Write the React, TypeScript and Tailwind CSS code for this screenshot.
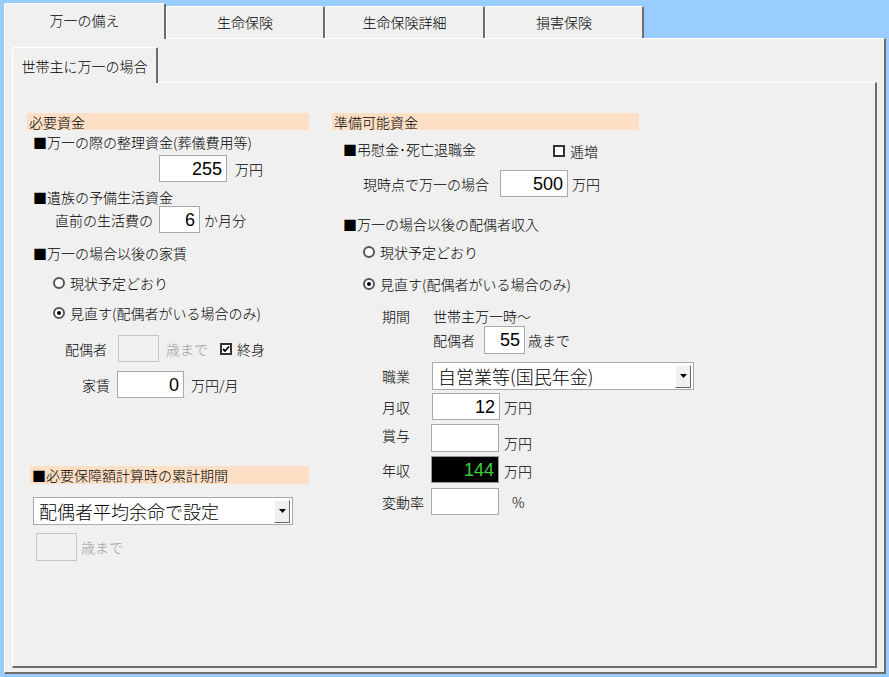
import React from "react";

type BoxProps = {
  value?: string;
  className: string;
  dark?: boolean;
  disabled?: boolean;
};

function Box({ value = "", className, dark, disabled }: BoxProps) {
  const tone = dark
    ? "bg-black text-[#3ccf3c] border-[#9a9a9a]"
    : disabled
    ? "bg-[#f0f0f0] border-[#c4c4c4]"
    : "bg-white text-black border-[#a9a9a9]";
  return (
    <div
      className={`flex shrink-0 items-center justify-end border pr-[4px] font-['Liberation_Sans',sans-serif] text-[18px] leading-none ${tone} ${className}`}
    >
      {value}
    </div>
  );
}

function Radio({ checked }: { checked?: boolean }) {
  return (
    <span className="flex h-[12px] w-[12px] shrink-0 items-center justify-center rounded-full border-2 border-[#555] bg-white">
      {checked && <span className="h-[4px] w-[4px] rounded-full bg-black" />}
    </span>
  );
}

function Check({ checked }: { checked?: boolean }) {
  return (
    <span className="flex h-[12px] w-[12px] shrink-0 items-center justify-center border-2 border-[#333] bg-white">
      {checked && (
        <svg width="8" height="8" viewBox="0 0 8 8">
          <path d="M1 4 L3 6 L7 1.5" stroke="#000" strokeWidth="1.8" fill="none" />
        </svg>
      )}
    </span>
  );
}

function Select({ value, className }: { value: string; className: string }) {
  return (
    <div
      className={`flex shrink-0 items-center border border-[#a9a9a9] bg-white pl-[5px] pr-[2px] text-[18px] leading-none ${className}`}
    >
      <span className="flex-1 whitespace-nowrap">{value}</span>
      <span className="flex h-[23px] w-[16px] shrink-0 items-center justify-center border border-t-white border-l-white border-r-[#696969] border-b-[#696969] bg-[#f0f0f0]">
        <svg width="7" height="4" viewBox="0 0 7 4">
          <path d="M0 0 H7 L3.5 4 Z" fill="#000" />
        </svg>
      </span>
    </div>
  );
}

function Tab({ label, active, className }: { label: string; active?: boolean; className: string }) {
  return (
    <div
      className={`flex items-center justify-center rounded-t-[2px] border-t border-l border-r-2 border-t-white border-l-white border-r-[#6d6d6d] bg-[#f0f0f0] text-[14px] ${
        active ? "z-10 -mb-px h-[36px]" : "h-[32px]"
      } ${className}`}
    >
      {label}
    </div>
  );
}

export default function App() {
  return (
    <div className="flex h-[677px] w-[889px] flex-col bg-[#99ccff] pl-[4px] pt-[3px] font-['Noto_Sans_CJK_JP',sans-serif] font-light text-black">
      {/* top tabs */}
      <div className="flex h-[35px] items-end">
        <Tab label="万一の備え" active className="w-[162px] pb-[2px]" />
        <Tab label="生命保険" className="w-[159px]" />
        <Tab label="生命保険詳細" className="w-[160px]" />
        <Tab label="損害保険" className="w-[159px]" />
      </div>

      <div className="flex h-[636px] w-[882px] flex-col border-t border-l border-r-2 border-b-2 border-t-white border-l-white border-r-[#6d6d6d] border-b-[#6d6d6d] bg-[#f0f0f0] pl-[7px] pt-[6px]">
        {/* inner tab */}
        <div className="flex h-[37px] items-end">
          <Tab label="世帯主に万一の場合" active className="w-[146px] pt-[2px]" />
        </div>

        <div className="flex h-[586px] w-[865px] border-t border-l border-r-2 border-b-2 border-t-white border-l-white border-r-[#6d6d6d] border-b-[#6d6d6d] pl-[14px] pt-[30px] text-[14px] leading-none">
          {/* left column */}
          <div className="flex w-[282px] shrink-0 flex-col">
            <div className="flex h-[17px] items-center bg-[#fddfc5] pl-[2px]">必要資金</div>
            <div className="ml-[6px] mt-[3px] flex h-[18px] items-center">■万一の際の整理資金(葬儀費用等)</div>
            <div className="ml-[132px] mt-[4px] flex items-center">
              <Box className="h-[27px] w-[68px]" value="255" />
              <span className="ml-[8px]">万円</span>
            </div>
            <div className="ml-[6px] mt-[7px] flex h-[16px] items-center">■遺族の予備生活資金</div>
            <div className="ml-[28px] mt-[1px] flex items-center">
              <span className="w-[104px] shrink-0">直前の生活費の</span>
              <Box className="h-[27px] w-[41px]" value="6" />
              <span className="ml-[4px]">か月分</span>
            </div>
            <div className="ml-[6px] mt-[12px] flex h-[16px] items-center">■万一の場合以後の家賃</div>
            <div className="ml-[26px] mt-[14px] flex h-[16px] items-center gap-[5px]">
              <Radio />
              <span>現状予定どおり</span>
            </div>
            <div className="ml-[26px] mt-[14px] flex h-[16px] items-center gap-[5px]">
              <Radio checked />
              <span>見直す(配偶者がいる場合のみ)</span>
            </div>
            <div className="ml-[38px] mt-[14px] flex items-center">
              <span className="w-[53px] shrink-0">配偶者</span>
              <Box className="h-[27px] w-[41px]" disabled />
              <span className="ml-[7px] text-[#a0a0a0]">歳まで</span>
              <span className="ml-[12px] flex items-center gap-[5px]">
                <Check checked />
                <span>終身</span>
              </span>
            </div>
            <div className="ml-[55px] mt-[9px] flex items-center">
              <span className="w-[35px] shrink-0">家賃</span>
              <Box className="h-[27px] w-[67px]" value="0" />
              <span className="ml-[7px]">万円/月</span>
            </div>

            <div className="ml-[3px] mt-[68px] flex h-[18px] items-center bg-[#fddfc5] pl-[2px]">■必要保障額計算時の累計期間</div>
            <Select value="配偶者平均余命で設定" className="ml-[6px] mt-[13px] h-[28px] w-[260px]" />
            <div className="ml-[9px] mt-[8px] flex items-center">
              <Box className="h-[28px] w-[41px]" disabled />
              <span className="ml-[4px] text-[#a0a0a0]">歳まで</span>
            </div>
          </div>

          {/* right column */}
          <div className="ml-[23px] flex w-[380px] shrink-0 flex-col">
            <div className="flex h-[17px] w-[307px] items-center bg-[#fddfc5] pl-[2px]">準備可能資金</div>
            <div className="ml-[11px] mt-[11px] flex h-[16px] items-center">
              <span className="w-[210px] shrink-0">■弔慰金･死亡退職金</span>
              <span className="mt-[3px] flex items-center gap-[5px]">
                <Check />
                <span>逓増</span>
              </span>
            </div>
            <div className="ml-[31px] mt-[13px] flex items-center">
              <span className="w-[137px] shrink-0">現時点で万一の場合</span>
              <Box className="h-[27px] w-[68px]" value="500" />
              <span className="ml-[4px]">万円</span>
            </div>
            <div className="ml-[11px] mt-[19px] flex h-[16px] items-center">■万一の場合以後の配偶者収入</div>
            <div className="ml-[31px] mt-[12px] flex h-[16px] items-center gap-[5px]">
              <Radio />
              <span>現状予定どおり</span>
            </div>
            <div className="ml-[31px] mt-[16px] flex h-[16px] items-center gap-[5px]">
              <Radio checked />
              <span>見直す(配偶者がいる場合のみ)</span>
            </div>
            <div className="ml-[50px] mt-[16px] flex h-[16px] items-center">
              <span className="w-[51px] shrink-0">期間</span>
              <span>世帯主万一時～</span>
            </div>
            <div className="ml-[101px] mt-[2px] flex items-center">
              <span className="w-[51px] shrink-0">配偶者</span>
              <Box className="h-[28px] w-[41px]" value="55" />
              <span className="ml-[3px]">歳まで</span>
            </div>
            <div className="ml-[50px] mt-[8px] flex items-center">
              <span className="w-[50px] shrink-0">職業</span>
              <Select value="自営業等(国民年金)" className="h-[28px] w-[262px]" />
            </div>
            <div className="ml-[50px] mt-[3px] flex items-center">
              <span className="w-[50px] shrink-0">月収</span>
              <Box className="h-[27px] w-[68px]" value="12" />
              <span className="ml-[4px]">万円</span>
            </div>
            <div className="ml-[50px] mt-[4px] flex">
              <span className="mt-[4px] w-[49px] shrink-0">賞与</span>
              <Box className="h-[28px] w-[68px]" />
              <span className="ml-[5px] mt-[12px]">万円</span>
            </div>
            <div className="ml-[50px] mt-[4px] flex items-center">
              <span className="w-[49px] shrink-0">年収</span>
              <Box className="h-[27px] w-[68px]" value="144" dark />
              <span className="ml-[5px] mt-[3px]">万円</span>
            </div>
            <div className="ml-[50px] mt-[5px] flex items-center">
              <span className="w-[49px] shrink-0">変動率</span>
              <Box className="h-[27px] w-[68px]" />
              <span className="ml-[13px]">%</span>
            </div>
          </div>
        </div>
      </div>
    </div>
  );
}
